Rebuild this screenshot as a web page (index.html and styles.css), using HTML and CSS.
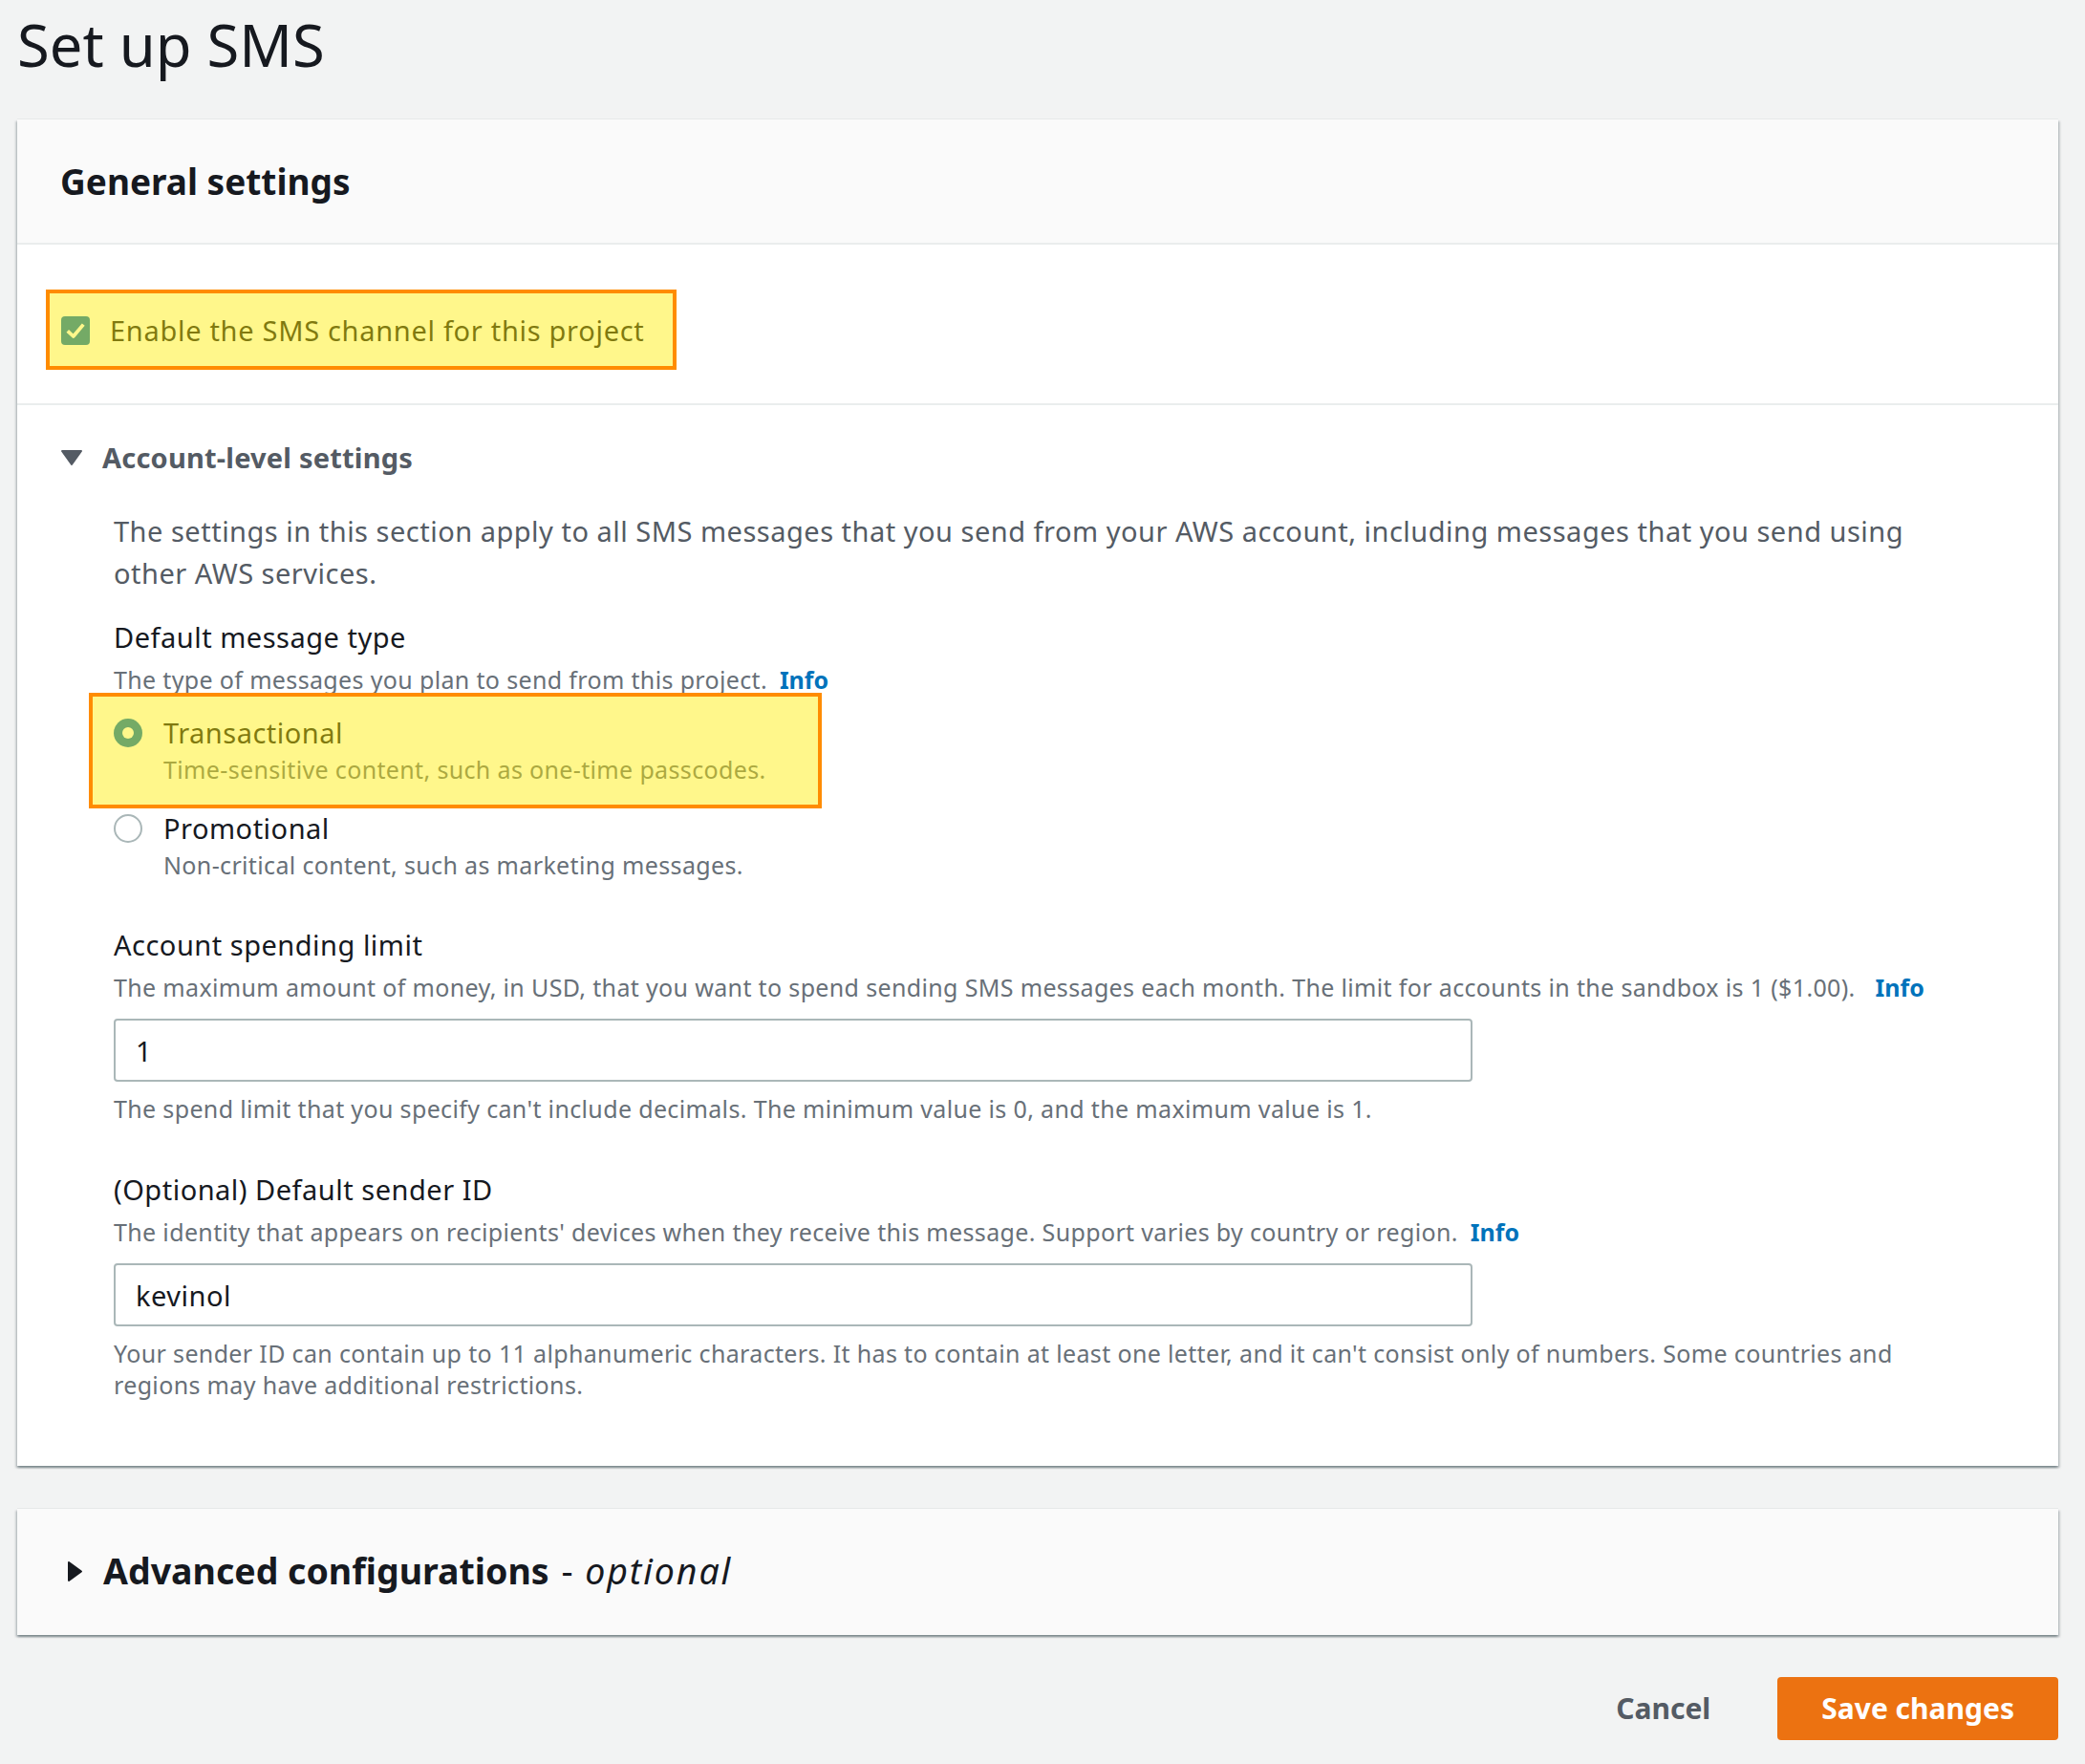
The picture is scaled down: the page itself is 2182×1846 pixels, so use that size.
FILE: index.html
```html
<!DOCTYPE html>
<html lang="en">
<head>
<meta charset="utf-8">
<title>Set up SMS</title>
<link rel="stylesheet" href="styles.css">
</head>
<body>
<div class="page">
  <h1 class="title">Set up SMS</h1>

  <section class="card">
    <div class="card-header"><h2>General settings</h2></div>

    <div class="card-section section-enable">
      <label class="check-row hl hl-check">
        <span class="checkbox"><svg viewBox="0 0 16 16" width="30" height="30"><polyline points="3.6,8.2 6.8,11.2 12.4,4.6" fill="none" stroke="#fff" stroke-width="2" stroke-linejoin="round"/></svg></span>
        <span>Enable the SMS channel for this project</span>
      </label>
    </div>

    <div class="card-section section-account">
      <div class="expander">
        <svg class="caret-down" width="24" height="18" viewBox="0 0 24 18"><path d="M2 2 H22 L12 16 Z" fill="#545b64" stroke="#545b64" stroke-width="2" stroke-linejoin="round"/></svg>
        <span>Account-level settings</span>
      </div>
      <div class="expander-body">
        <p class="intro">The settings in this section apply to all SMS messages that you send from your AWS account, including messages that you send using other AWS services.</p>

        <div class="field field-type">
          <div class="label">Default message type</div>
          <div class="desc">The type of messages you plan to send from this project. <a class="info">Info</a></div>
          <div class="radio-group">
            <div class="radio-option hl hl-radio">
              <span class="radio checked"></span>
              <div>
                <div class="radio-label">Transactional</div>
                <div class="radio-desc">Time-sensitive content, such as one-time passcodes.</div>
              </div>
            </div>
            <div class="radio-option">
              <span class="radio"></span>
              <div>
                <div class="radio-label">Promotional</div>
                <div class="radio-desc">Non-critical content, such as marketing messages.</div>
              </div>
            </div>
          </div>
        </div>

        <div class="field">
          <div class="label">Account spending limit</div>
          <div class="desc">The maximum amount of money, in USD, that you want to spend sending SMS messages each month. The limit for accounts in the sandbox is 1 ($1.00). <a class="info info-wide">Info</a></div>
          <input class="input" type="text" value="1">
          <div class="constraint">The spend limit that you specify can't include decimals. The minimum value is 0, and the maximum value is 1.</div>
        </div>

        <div class="field">
          <div class="label">(Optional) Default sender ID</div>
          <div class="desc">The identity that appears on recipients' devices when they receive this message. Support varies by country or region. <a class="info">Info</a></div>
          <input class="input" type="text" value="kevinol">
          <div class="constraint">Your sender ID can contain up to 11 alphanumeric characters. It has to contain at least one letter, and it can't consist only of numbers. Some countries and regions may have additional restrictions.</div>
        </div>
      </div>
    </div>
  </section>

  <section class="card card-collapsed">
    <svg class="caret-right" width="17" height="23" viewBox="0 0 17 23"><path d="M2 2 L15 11.5 L2 21 Z" fill="#16191f" stroke="#16191f" stroke-width="2" stroke-linejoin="round"/></svg>
    <h2>Advanced configurations <span class="opt">- <i>optional</i></span></h2>
  </section>

  <div class="actions">
    <button class="btn btn-link" type="button">Cancel</button>
    <button class="btn btn-primary" type="button">Save changes</button>
  </div>
</div>
</body>
</html>
```

FILE: styles.css
```css
html, body {
  margin: 0;
  background: #f2f3f3;
}

body {
  font-family: "Noto Sans", "Open Sans", sans-serif;
  color: #16191f;
}

.page {
  padding: 6px 28px 0 18px;
}

.title {
  margin: 0 0 39px 0;
  font-size: 61.5px;
  line-height: 80px;
  font-weight: 400;
  color: #16191f;
}

/* Cards */
.card {
  background: #fff;
  box-shadow: 0 2px 2px 0 rgba(0, 28, 36, 0.3),
              2px 2px 2px 0 rgba(0, 28, 36, 0.15),
              -2px 2px 2px 0 rgba(0, 28, 36, 0.15),
              0 -1px 0 0 #e6e9e9;
}

.card-header {
  background: #fafafa;
  padding: 41px 45px 40px;
  border-bottom: 2px solid #eaeded;
}

.card-header h2 {
  margin: 0;
  font-size: 37px;
  line-height: 48px;
  font-weight: 700;
}

.card-section {
  padding-left: 45px;
  padding-right: 45px;
}

.section-enable {
  padding-top: 68px;
  padding-bottom: 54px;
  border-bottom: 2px solid #eaeded;
}

.section-account {
  padding-top: 33px;
  padding-bottom: 68px;
}

/* Highlight annotation (drawn over the content) */
.hl {
  position: relative;
}

.hl::after {
  content: "";
  position: absolute;
  box-sizing: border-box;
  background: rgba(255, 237, 0, 0.455);
  border: 4px solid #ff8c00;
  pointer-events: none;
}

.hl-check::after {
  left: -16px;
  top: -21px;
  width: 660px;
  height: 84px;
}

.hl-radio::after {
  left: -26px;
  top: -20px;
  width: 767px;
  height: 121px;
}

/* Checkbox */
.check-row {
  display: inline-flex;
  align-items: center;
  gap: 21px;
  margin-left: 1px;
  font-size: 29px;
  line-height: 44px;
  letter-spacing: 0.7px;
  color: #16191f;
}

.checkbox {
  width: 30px;
  height: 30px;
  border-radius: 4px;
  background: #0073bb;
  display: flex;
  flex: none;
}

/* Expandable section */
.expander {
  display: flex;
  align-items: center;
  gap: 20px;
  font-size: 29px;
  line-height: 44px;
  font-weight: 700;
  letter-spacing: 0.2px;
  color: #545b64;
}

.caret-down,
.caret-right {
  flex: none;
  display: block;
}

.expander-body {
  margin: 33px 0 0 56px;
  max-width: 1926px;
}

.intro {
  margin: 0;
  font-size: 29px;
  line-height: 44px;
  letter-spacing: 0.5px;
  color: #545b64;
}

/* Fields */
.field-type {
  margin-top: 23px;
}

.field + .field {
  margin-top: 46px;
}

.label {
  font-size: 29px;
  line-height: 44px;
  letter-spacing: 0.5px;
  color: #16191f;
}

.desc {
  margin-top: 6px;
  font-size: 25px;
  line-height: 32px;
  letter-spacing: 0.35px;
  color: #687078;
}

.info {
  margin-left: 6px;
  color: #0073bb;
  font-weight: 700;
  letter-spacing: 0;
  text-decoration: none;
}

.info-wide {
  margin-left: 14px;
}

.input {
  display: block;
  margin-top: 17px;
  width: 1422px;
  height: 66px;
  box-sizing: border-box;
  border: 2px solid #aab7b8;
  border-radius: 4px;
  padding: 0 21px;
  background: #fff;
  font-family: "Noto Sans", "Open Sans", sans-serif;
  font-size: 29px;
  letter-spacing: 0.5px;
  color: #16191f;
  outline: none;
}

.constraint {
  margin-top: 12px;
  font-size: 25px;
  line-height: 33px;
  letter-spacing: 0.35px;
  color: #687078;
}

/* Radios */
.radio-group {
  margin-top: 18px;
  display: flex;
  flex-direction: column;
  gap: 24px;
}

.radio-option {
  display: flex;
  align-items: flex-start;
  gap: 22px;
}

.radio {
  flex: none;
  width: 30px;
  height: 30px;
  margin-top: 7px;
  box-sizing: border-box;
  border: 2px solid #aab7b8;
  border-radius: 50%;
  background: #fff;
}

.radio.checked {
  border: none;
  background: #0073bb;
  display: flex;
  align-items: center;
  justify-content: center;
}

.radio.checked::before {
  content: "";
  width: 12px;
  height: 12px;
  border-radius: 50%;
  background: #fff;
}

.radio-label {
  font-size: 29px;
  line-height: 44px;
  letter-spacing: 0.5px;
  color: #16191f;
}

.radio-desc {
  font-size: 25px;
  line-height: 32px;
  letter-spacing: 0.35px;
  color: #687078;
}

/* Collapsed card */
.card-collapsed {
  margin-top: 45px;
  background: #fafafa;
  padding: 41px 45px 43px 52px;
  display: flex;
  align-items: center;
  gap: 21px;
}

.card-collapsed h2 {
  margin: 0;
  font-size: 37.5px;
  line-height: 48px;
  font-weight: 700;
  color: #16191f;
}

.card-collapsed .opt {
  font-weight: 400;
  margin-left: 3px;
}

.card-collapsed .opt i {
  margin-left: 3px;
  letter-spacing: 1.9px;
}

/* Actions */
.actions {
  margin-top: 44px;
  display: flex;
  justify-content: flex-end;
  gap: 24px;
}

.btn {
  height: 66px;
  padding: 0 46px;
  border: none;
  border-radius: 4px;
  font-family: "Noto Sans", "Open Sans", sans-serif;
  font-size: 30px;
  line-height: 66px;
  font-weight: 700;
  cursor: pointer;
}

.btn-link {
  background: transparent;
  color: #545b64;
}

.btn-primary {
  background: #ec7211;
  color: #fff;
}
```
